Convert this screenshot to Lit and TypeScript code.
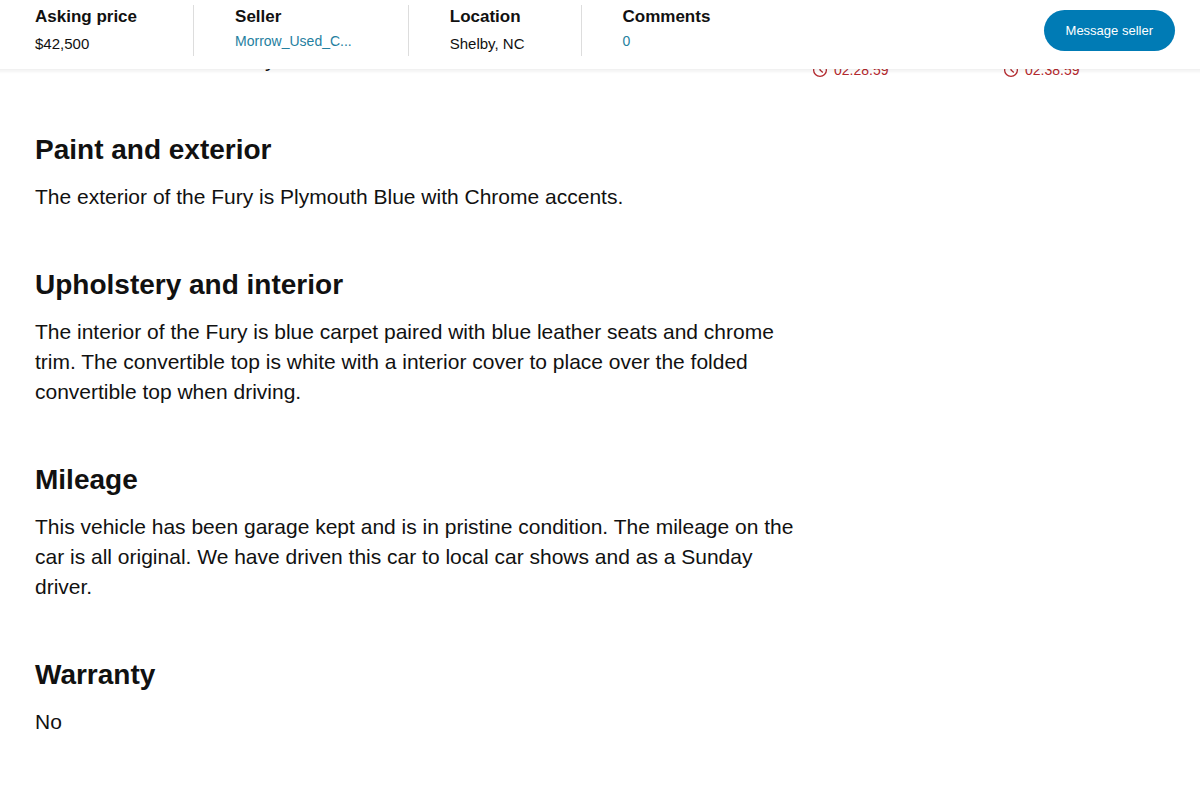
import { LitElement, html, css, svg } from "lit";
import { customElement } from "lit/decorators.js";

const clock = svg`<circle cx="8" cy="8" r="6.4"></circle><path d="M8 4V8L10.8 10.4"></path>`;

const sections = [
  { title: "Paint and exterior", text: "The exterior of the Fury is Plymouth Blue with Chrome accents." },
  {
    title: "Upholstery and interior",
    text: "The interior of the Fury is blue carpet paired with blue leather seats and chrome trim. The convertible top is white with a interior cover to place over the folded convertible top when driving.",
  },
  {
    title: "Mileage",
    text: "This vehicle has been garage kept and is in pristine condition. The mileage on the car is all original. We have driven this car to local car shows and as a Sunday driver.",
  },
  { title: "Warranty", text: "No" },
];

@customElement("app-root")
export class AppRoot extends LitElement {
  static styles = css`
    :host {
      display: block;
      min-height: 100vh;
      background: #fff;
      color: #111;
      font-family: "Liberation Sans", Arial, sans-serif;
    }
    * {
      box-sizing: border-box;
    }
    .bar {
      position: fixed;
      z-index: 1;
      top: 0;
      left: 0;
      right: 0;
      height: 69px;
      padding: 5px 25px 13px 35px;
      display: flex;
      align-items: stretch;
      background: #fff;
    }
    .bar::after {
      content: "";
      position: absolute;
      top: 100%;
      left: 0;
      right: 0;
      height: 5px;
      background: linear-gradient(rgba(0, 0, 0, 0.06), rgba(0, 0, 0, 0));
    }
    .facts {
      display: flex;
      margin: 0;
    }
    .fact {
      padding: 0 56px 0 0;
    }
    .fact + .fact {
      padding-left: 41px;
      border-left: 1px solid #ddd;
    }
    .fact:last-child {
      padding-right: 0;
    }
    .fact dt {
      font-size: 17px;
      line-height: 24px;
      font-weight: 700;
    }
    .fact dd {
      margin: 4px 0 0;
      font-size: 15px;
      line-height: 22px;
    }
    .fact dd.linked {
      margin-top: 1px;
      font-size: 14px;
    }
    a {
      color: #2580a0;
      text-decoration: none;
    }
    .message {
      margin: 5px 0 5px auto;
      height: 41px;
      padding: 0 22px;
      border: 0;
      border-radius: 21px;
      background: #007bb5;
      color: #fff;
      font: 13px/20px "Liberation Sans", Arial, sans-serif;
      cursor: pointer;
    }
    .page {
      display: grid;
      grid-template-columns: minmax(0, 765px) minmax(0, 1fr);
      column-gap: 12px;
      padding: 45px 25px 40px 35px;
    }
    .text {
      margin: 0;
      font-size: 21px;
      line-height: 30px;
    }
    .tail {
      padding: 0 0 2px 230px;
    }
    .title {
      margin: 55px 0 14px;
      font-size: 28px;
      line-height: 36px;
      font-weight: 700;
    }
    .timers {
      display: grid;
      grid-template-columns: 191px 1fr;
      align-items: start;
      padding-top: 16px;
      color: #b3282d;
      font-size: 14px;
      line-height: 18px;
    }
    .timer {
      display: flex;
      align-items: center;
      gap: 6px;
    }
    .clock {
      width: 16px;
      height: 16px;
      fill: none;
      stroke: currentColor;
      stroke-width: 1.3;
    }
  `;

  render() {
    return html`
      <header class="bar">
        <dl class="facts">
          <div class="fact"><dt>Asking price</dt><dd>$42,500</dd></div>
          <div class="fact"><dt>Seller</dt><dd class="linked"><a href="#seller">Morrow_Used_C...</a></dd></div>
          <div class="fact"><dt>Location</dt><dd>Shelby, NC</dd></div>
          <div class="fact"><dt>Comments</dt><dd class="linked"><a href="#comments">0</a></dd></div>
        </dl>
        <button class="message" type="button">Message seller</button>
      </header>
      <main class="page">
        <article>
          <p class="text tail">y</p>
          ${sections.map((s) => html`<h2 class="title">${s.title}</h2><p class="text">${s.text}</p>`)}
        </article>
        <aside class="timers">
          ${["02:28:59", "02:38:59"].map(
            (t) => html`<div class="timer"><svg class="clock" viewBox="0 0 16 16" aria-hidden="true">${clock}</svg><span>${t}</span></div>`
          )}
        </aside>
      </main>
    `;
  }
}
